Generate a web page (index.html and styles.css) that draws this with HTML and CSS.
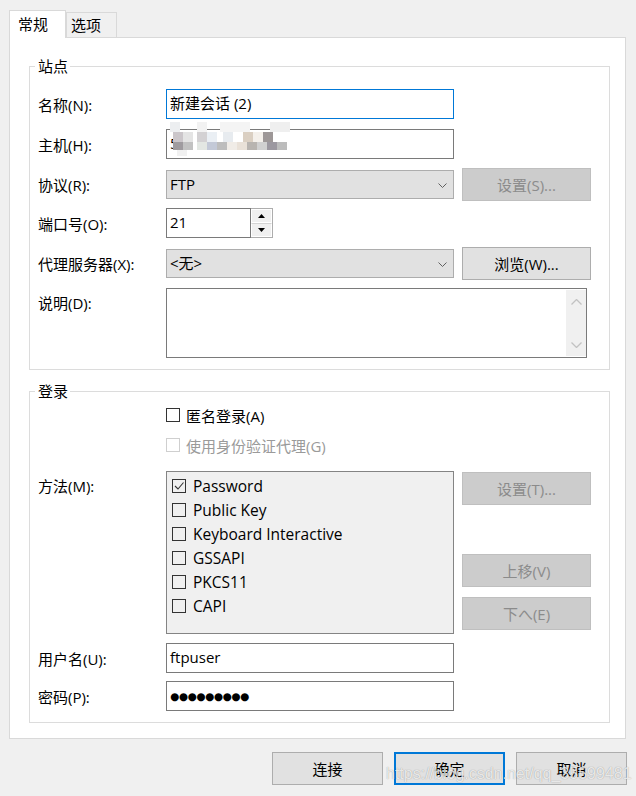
FILE: index.html
```html
<!DOCTYPE html>
<html lang="zh-CN">
<head>
  <meta charset="UTF-8">
  <title>新建会话</title>
  <link rel="stylesheet" href="styles.css">
</head>
<body>
<div class="dialog">
  <div class="tabs">
    <div class="tab active">常规</div>
    <div class="tab">选项</div>
  </div>

  <div class="panel">
    <fieldset class="group site">
      <legend>站点</legend>

      <div class="row r-first">
        <label class="lbl">名称(N):</label>
        <div class="field focus">新建会话 (2)</div>
      </div>

      <div class="row r-gap10">
        <label class="lbl">主机(H):</label>
        <div class="field host">5
          <svg class="mosaic" width="136" height="34" viewBox="0 0 136 34">
            <rect x="13" y="0" width="10" height="10" fill="#eceef0"/>
            <rect x="40" y="0" width="10" height="10" fill="#f2f2f2"/>
            <rect x="63" y="0" width="30" height="10" fill="#f4f4f4"/>
            <rect x="113" y="0" width="20" height="10" fill="#efefef"/>
            <rect x="16" y="10" width="10" height="10" fill="#cbc6ca"/>
            <rect x="26" y="10" width="10" height="10" fill="#e4e4e4"/>
            <rect x="40" y="10" width="10" height="10" fill="#d3d1d3"/>
            <rect x="50" y="10" width="10" height="10" fill="#eaeff4"/>
            <rect x="66" y="10" width="10" height="10" fill="#e7ebef"/>
            <rect x="86" y="10" width="10" height="10" fill="#dacfc2"/>
            <rect x="96" y="10" width="10" height="10" fill="#f4f0eb"/>
            <rect x="106" y="10" width="10" height="10" fill="#9d9797"/>
            <rect x="16" y="20" width="10" height="8" fill="#9f9b9f"/>
            <rect x="26" y="20" width="10" height="8" fill="#c2c2c2"/>
            <rect x="40" y="20" width="10" height="8" fill="#e3e7e3"/>
            <rect x="50" y="20" width="10" height="8" fill="#c3c9d7"/>
            <rect x="60" y="20" width="10" height="8" fill="#bdbdbd"/>
            <rect x="70" y="20" width="10" height="8" fill="#f0ece7"/>
            <rect x="80" y="20" width="10" height="8" fill="#e9e1d8"/>
            <rect x="90" y="20" width="10" height="8" fill="#b8b4b0"/>
            <rect x="100" y="20" width="10" height="8" fill="#d0d0d0"/>
            <rect x="110" y="20" width="10" height="8" fill="#9c98a0"/>
            <rect x="120" y="20" width="10" height="8" fill="#bcbcbc"/>
            <rect x="20" y="28" width="10" height="6" fill="#f1f1f1"/>
          </svg>
        </div>
      </div>

      <div class="row r-gap9 r-btn">
        <label class="lbl">协议(R):</label>
        <div class="select">FTP
          <svg class="chev" width="9" height="5" viewBox="0 0 9 5"><polyline points="0.5,0.5 4.5,4.5 8.5,0.5" fill="none" stroke="#606060" stroke-width="1"/></svg>
        </div>
        <button class="btn disabled">设置(S)...</button>
      </div>

      <div class="row r-gap7">
        <label class="lbl">端口号(O):</label>
        <div class="spin">
          <div class="spin-text">21</div>
          <div class="spin-btns">
            <span class="spin-b"><svg width="7" height="4" viewBox="0 0 7 4"><polygon points="3.5,0 7,4 0,4" fill="#000"/></svg></span>
            <span class="spin-b"><svg width="7" height="4" viewBox="0 0 7 4"><polygon points="0,0 7,0 3.5,4" fill="#000"/></svg></span>
          </div>
        </div>
      </div>

      <div class="row r-gap9 r-btn">
        <label class="lbl">代理服务器(X):</label>
        <div class="select">&lt;无&gt;
          <svg class="chev" width="9" height="5" viewBox="0 0 9 5"><polyline points="0.5,0.5 4.5,4.5 8.5,0.5" fill="none" stroke="#606060" stroke-width="1"/></svg>
        </div>
        <button class="btn">浏览(W)...</button>
      </div>

      <div class="row r-gap8 r-top">
        <label class="lbl">说明(D):</label>
        <div class="memo">
          <div class="vscroll">
            <svg width="11" height="6" viewBox="0 0 11 6"><polyline points="0.5,5.5 5.5,0.5 10.5,5.5" fill="none" stroke="#c2c2c2" stroke-width="1.3"/></svg>
            <svg width="11" height="6" viewBox="0 0 11 6"><polyline points="0.5,0.5 5.5,5.5 10.5,0.5" fill="none" stroke="#c2c2c2" stroke-width="1.3"/></svg>
          </div>
        </div>
      </div>
    </fieldset>

    <fieldset class="group login">
      <legend>登录</legend>

      <div class="row r-check r-first2">
        <span class="lbl"></span>
        <div class="check"><span class="box"></span>匿名登录(A)</div>
      </div>

      <div class="row r-check r-gap6">
        <span class="lbl"></span>
        <div class="check off"><span class="box"></span>使用身份验证代理(G)</div>
      </div>

      <div class="row r-gap14 r-top">
        <label class="lbl">方法(M):</label>
        <div class="listbox">
          <div class="item"><span class="box"><svg width="12" height="12" viewBox="0 0 12 12"><polyline points="2,6 5,9 10.5,2.5" fill="none" stroke="#333" stroke-width="1.1"/></svg></span>Password</div>
          <div class="item"><span class="box"></span>Public Key</div>
          <div class="item"><span class="box"></span>Keyboard Interactive</div>
          <div class="item"><span class="box"></span>GSSAPI</div>
          <div class="item"><span class="box"></span>PKCS11</div>
          <div class="item"><span class="box"></span>CAPI</div>
        </div>
        <div class="side">
          <button class="btn disabled">设置(T)...</button>
          <button class="btn disabled move-up">上移(V)</button>
          <button class="btn disabled move-down">下へ(E)</button>
        </div>
      </div>

      <div class="row r-gap9">
        <label class="lbl">用户名(U):</label>
        <div class="field">ftpuser</div>
      </div>

      <div class="row r-gap8">
        <label class="lbl">密码(P):</label>
        <div class="field"><span class="dots">●●●●●●●●●</span></div>
      </div>
    </fieldset>
  </div>

  <div class="footer">
    <button class="btn foot">连接</button>
    <button class="btn foot default">确定</button>
    <button class="btn foot">取消</button>
  </div>

  <div class="watermark">https://blog.csdn.net/qq_35599481</div>
</div>
</body>
</html>
```

FILE: styles.css
```css
* {
  box-sizing: border-box;
}

body {
  margin: 0;
  background-color: #f0f0f0;
  font-family: "Open Sans", "Noto Sans CJK SC", sans-serif;
  font-size: 15px;
  color: #000;
}

.dialog {
  position: relative;
  width: 636px;
  height: 796px;
  padding: 10px 10px 0 9px;
  overflow: hidden;
}

/* tabs */
.tabs {
  display: flex;
  align-items: flex-end;
  height: 27px;
  position: relative;
  z-index: 1;
}

.tab {
  width: 51px;
  height: 25px;
  padding-left: 4px;
  line-height: 24px;
  background-color: #f0f0f0;
  border: 1px solid #d9d9d9;
  border-bottom: none;
}

.tab.active {
  width: 57px;
  height: 28px;
  padding-left: 8px;
  line-height: 26px;
  margin-bottom: -1px;
  background-color: #fff;
}

.panel {
  width: 617px;
  height: 702px;
  background-color: #fff;
  border: 1px solid #d9d9d9;
  padding: 20px 0 0 19px;
}

/* groups */
.group {
  width: 581px;
  margin: 0;
  min-width: 0;
  border: 1px solid #dcdcdc;
  padding: 0 18px 11px 5px;
}

.group legend {
  padding: 0 2px 0 3px;
  line-height: 16px;
}

.group.login {
  margin-top: 13px;
}

.row {
  display: flex;
  align-items: center;
  height: 30px;
}

.r-first { margin-top: 15px; }
.r-first2 { margin-top: 4px; }
.r-gap6 { margin-top: 6px; }
.r-gap7 { margin-top: 7px; }
.r-gap8 { margin-top: 8px; }
.r-gap9 { margin-top: 9px; }
.r-gap10 { margin-top: 10px; }
.r-gap14 { margin-top: 14px; }

.r-btn {
  height: 33px;
}

.r-top {
  height: auto;
  align-items: flex-start;
}

.r-check {
  height: 24px;
}

.lbl {
  flex: 0 0 131px;
  padding-left: 3px;
  white-space: nowrap;
}

.r-top .lbl {
  line-height: 30px;
}

/* fields */
.field {
  position: relative;
  width: 288px;
  height: 30px;
  border: 1px solid #7a7a7a;
  padding-left: 3px;
  line-height: 27px;
  background-color: #fff;
}

.field.focus {
  border-color: #0078d7;
}

.mosaic {
  position: absolute;
  left: -10px;
  top: -8px;
}

.dots {
  font-family: "DejaVu Sans", sans-serif;
  font-size: 10.5px;
  letter-spacing: -0.4px;
  position: relative;
  top: -1px;
}

.select {
  position: relative;
  width: 288px;
  height: 29px;
  border: 1px solid #adadad;
  background-color: #e1e1e1;
  padding-left: 3px;
  line-height: 26px;
}

.chev {
  position: absolute;
  right: 6px;
  top: 12px;
}

.btn {
  font-family: "Open Sans", "Noto Sans CJK SC", sans-serif;
  font-size: 15px;
  color: #000;
  width: 129px;
  height: 33px;
  margin-left: 8px;
  padding: 0;
  background-color: #e1e1e1;
  border: 1px solid #adadad;
}

.btn.disabled {
  background-color: #cccccc;
  border-color: #bfbfbf;
  color: #8b8b8b;
}

.spin {
  display: flex;
  height: 30px;
}

.spin-text {
  width: 85px;
  border: 1px solid #7a7a7a;
  padding-left: 3px;
  line-height: 27px;
}

.spin-btns {
  width: 22px;
  display: flex;
  flex-direction: column;
  border: 1px solid #adadad;
  border-left: none;
}

.spin-b {
  flex: 1;
  display: flex;
  align-items: center;
  justify-content: center;
  background-color: #f0f0f0;
  border: 1px solid #fff;
}

.spin-b + .spin-b {
  border-top: 1px solid #d4d4d4;
}

.memo {
  width: 421px;
  height: 70px;
  border: 1px solid #7a7a7a;
  display: flex;
  justify-content: flex-end;
  padding: 1px 0;
}

.vscroll {
  width: 20px;
  background-color: #f0f0f0;
  display: flex;
  flex-direction: column;
  align-items: center;
  justify-content: space-between;
  padding: 9px 0 8px;
}

/* checkboxes */
.check {
  display: flex;
  align-items: center;
}

.box {
  width: 14px;
  height: 14px;
  border: 1px solid #333;
  margin-right: 6px;
  display: flex;
  align-items: center;
  justify-content: center;
}

.check.off {
  color: #9a9a9a;
}

.check.off .box {
  border-color: #cfcfcf;
}

.listbox {
  width: 288px;
  height: 163px;
  border: 1px solid #848484;
  background-color: #f0f0f0;
  padding: 2px 0 0 5px;
}

.item {
  display: flex;
  align-items: center;
  height: 24px;
  font-size: 15.5px;
}

.item .box {
  margin-right: 7px;
}

.side {
  display: flex;
  flex-direction: column;
  padding-top: 1px;
}

.move-up {
  margin-top: 49px;
}

.move-down {
  margin-top: 10px;
}

/* footer */
.footer {
  display: flex;
  justify-content: flex-end;
  gap: 11px;
  padding-top: 13px;
  margin-right: -1px;
}

.btn.foot {
  width: 111px;
  height: 33px;
  margin-left: 0;
}

.btn.default {
  border: 2px solid #0078d7;
}

.watermark {
  position: absolute;
  left: 386px;
  top: 765px;
  font-family: "Liberation Sans", sans-serif;
  font-size: 16px;
  color: rgba(255, 255, 255, 0.8);
  text-shadow: 0 0 1px rgba(0, 0, 0, 0.4);
  white-space: nowrap;
}
```
